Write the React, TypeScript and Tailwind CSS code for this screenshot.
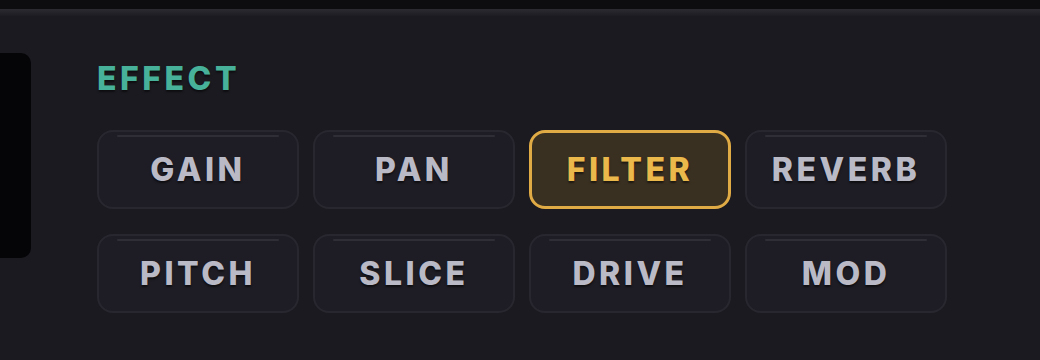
import React from "react";

const rows = [
  ["GAIN", "PAN", "FILTER", "REVERB"],
  ["PITCH", "SLICE", "DRIVE", "MOD"],
];

export default function App() {
  return (
    <div className="w-[1040px] h-[360px] bg-[#1b1a20] flex flex-col overflow-hidden [font-family:Inter,'Liberation_Sans',sans-serif]">
      <div className="h-[9px] bg-[#0d0d10] shrink-0" />
      <div className="h-[7px] shrink-0 bg-gradient-to-b from-[#2c2b32] to-[#1d1c22]" />
      <div className="flex flex-1">
        <div className="w-[31px] h-[205px] mt-[37px] bg-[#050507] rounded-r-[10px] shrink-0" />
        <div className="pl-[66px] pt-[47px] flex flex-col">
          <div className="text-[32px] leading-none font-extrabold tracking-[0.11em] text-[#48b19a] [text-shadow:0_2px_2px_rgba(0,0,0,0.5)]">
            EFFECT
          </div>
          <div className="mt-[35px] grid grid-cols-[repeat(4,202px)] gap-x-[14px] gap-y-[25px]">
            {rows.flat().map((label) => {
              const active = label === "FILTER";
              return (
                <div
                  key={label}
                  className={
                    active
                      ? "relative h-[79px] rounded-[16px] border-[3px] border-[#e0ab45] bg-[#3a3022] flex items-center justify-center"
                      : "relative h-[79px] rounded-[16px] border-2 border-[#28272f] bg-[#1e1d25] flex items-center justify-center"
                  }
                >
                  {!active && (
                    <div className="absolute top-[3px] left-[18px] right-[18px] h-[2px] rounded-full bg-[#2f2e37]" />
                  )}
                  <span
                    className={
                      active
                        ? "text-[32px] leading-none font-extrabold tracking-[0.11em] text-[#ebb84c] [text-shadow:0_2px_2px_rgba(0,0,0,0.5)]"
                        : "text-[32px] leading-none font-extrabold tracking-[0.11em] text-[#b9bac6] [text-shadow:0_2px_2px_rgba(0,0,0,0.55)]"
                    }
                  >
                    {label}
                  </span>
                </div>
              );
            })}
          </div>
        </div>
      </div>
    </div>
  );
}
